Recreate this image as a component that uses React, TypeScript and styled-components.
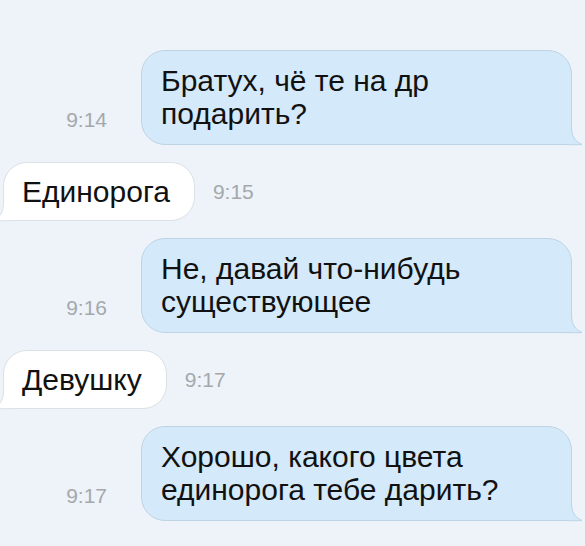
import styled, { createGlobalStyle } from 'styled-components';

type Side = 'out' | 'in';

interface Message {
  side: Side;
  time: string;
  lines: string[];
}

const messages: Message[] = [
  { side: 'out', time: '9:14', lines: ['Братух, чё те на др', 'подарить?'] },
  { side: 'in', time: '9:15', lines: ['Единорога'] },
  { side: 'out', time: '9:16', lines: ['Не, давай что-нибудь', 'существующее'] },
  { side: 'in', time: '9:17', lines: ['Девушку'] },
  { side: 'out', time: '9:17', lines: ['Хорошо, какого цвета', 'единорога тебе дарить?'] },
];

const GlobalStyle = createGlobalStyle`
  html, body {
    margin: 0;
    padding: 0;
    background: #edf3f9;
    overflow: hidden;
  }

  body {
    font-family: 'Liberation Sans', Arial, Helvetica, sans-serif;
    -webkit-font-smoothing: antialiased;
  }
`;

const Tail = ({ side }: { side: Side }) => (
  <TailSvg $side={side} width="24" height="18" viewBox="0 0 24 18">
    <path
      d="M0 0 H12.5 C12.5 9 16 14.5 23 17.5 C18 18 10 17.5 0 17.5 Z"
      fill="currentColor"
    />
    <path
      d="M12.5 0 C12.5 9 16 14.5 23 17.5 C18 18 10 17.5 0 17.5"
      fill="none"
      stroke="var(--tail-border)"
      strokeWidth="1"
    />
  </TailSvg>
);

const App = () => {
  return (
    <>
      <GlobalStyle />
      <Chat>
        {messages.map((msg, i) => (
          <Row key={i} $side={msg.side}>
            {msg.side === 'out' && <Time $side="out">{msg.time}</Time>}
            <Bubble $side={msg.side}>
              {msg.lines.map((line, j) => (
                <Line key={j}>{line}</Line>
              ))}
              <Tail side={msg.side} />
            </Bubble>
            {msg.side === 'in' && <Time $side="in">{msg.time}</Time>}
          </Row>
        ))}
      </Chat>
    </>
  );
};

const Chat = styled.div`
  display: flex;
  flex-direction: column;
  gap: 17px;
  padding: 50px 13px 0 3px;
  height: 546px;
  box-sizing: border-box;
`;

const Row = styled.div<{ $side: Side }>`
  display: flex;
  justify-content: ${({ $side }) => ($side === 'out' ? 'flex-end' : 'flex-start')};
  align-items: ${({ $side }) => ($side === 'out' ? 'flex-end' : 'center')};
  gap: ${({ $side }) => ($side === 'out' ? '34px' : '18px')};
`;

const Bubble = styled.div<{ $side: Side }>`
  position: relative;
  box-sizing: border-box;
  width: ${({ $side }) => ($side === 'out' ? '431px' : 'auto')};
  padding: ${({ $side }) => ($side === 'out' ? '13px 22px 14px 19px' : '12px 24px 12px 18px')};
  font-size: 30px;
  line-height: 33px;
  color: #111;
  background: ${({ $side }) => ($side === 'out' ? '#d4e9f9' : '#ffffff')};
  border: 1px solid ${({ $side }) => ($side === 'out' ? '#bed4e5' : '#dce1e6')};
  border-radius: ${({ $side }) => ($side === 'out' ? '24px 24px 0 24px' : '24px 24px 24px 0')};
  --tail-border: ${({ $side }) => ($side === 'out' ? '#bed4e5' : '#dce1e6')};

  & > svg {
    color: ${({ $side }) => ($side === 'out' ? '#d4e9f9' : '#ffffff')};
  }
`;

const Line = styled.div`
  white-space: nowrap;
`;

const TailSvg = styled.svg<{ $side: Side }>`
  position: absolute;
  bottom: -1px;
  ${({ $side }) => ($side === 'out' ? 'right: -12px;' : 'left: -12px; transform: scaleX(-1);')}
  overflow: visible;
`;

const Time = styled.span<{ $side: Side }>`
  font-size: 21px;
  color: #a5a8ab;
  margin-bottom: ${({ $side }) => ($side === 'out' ? '13px' : '0')};
`;

export default App;
